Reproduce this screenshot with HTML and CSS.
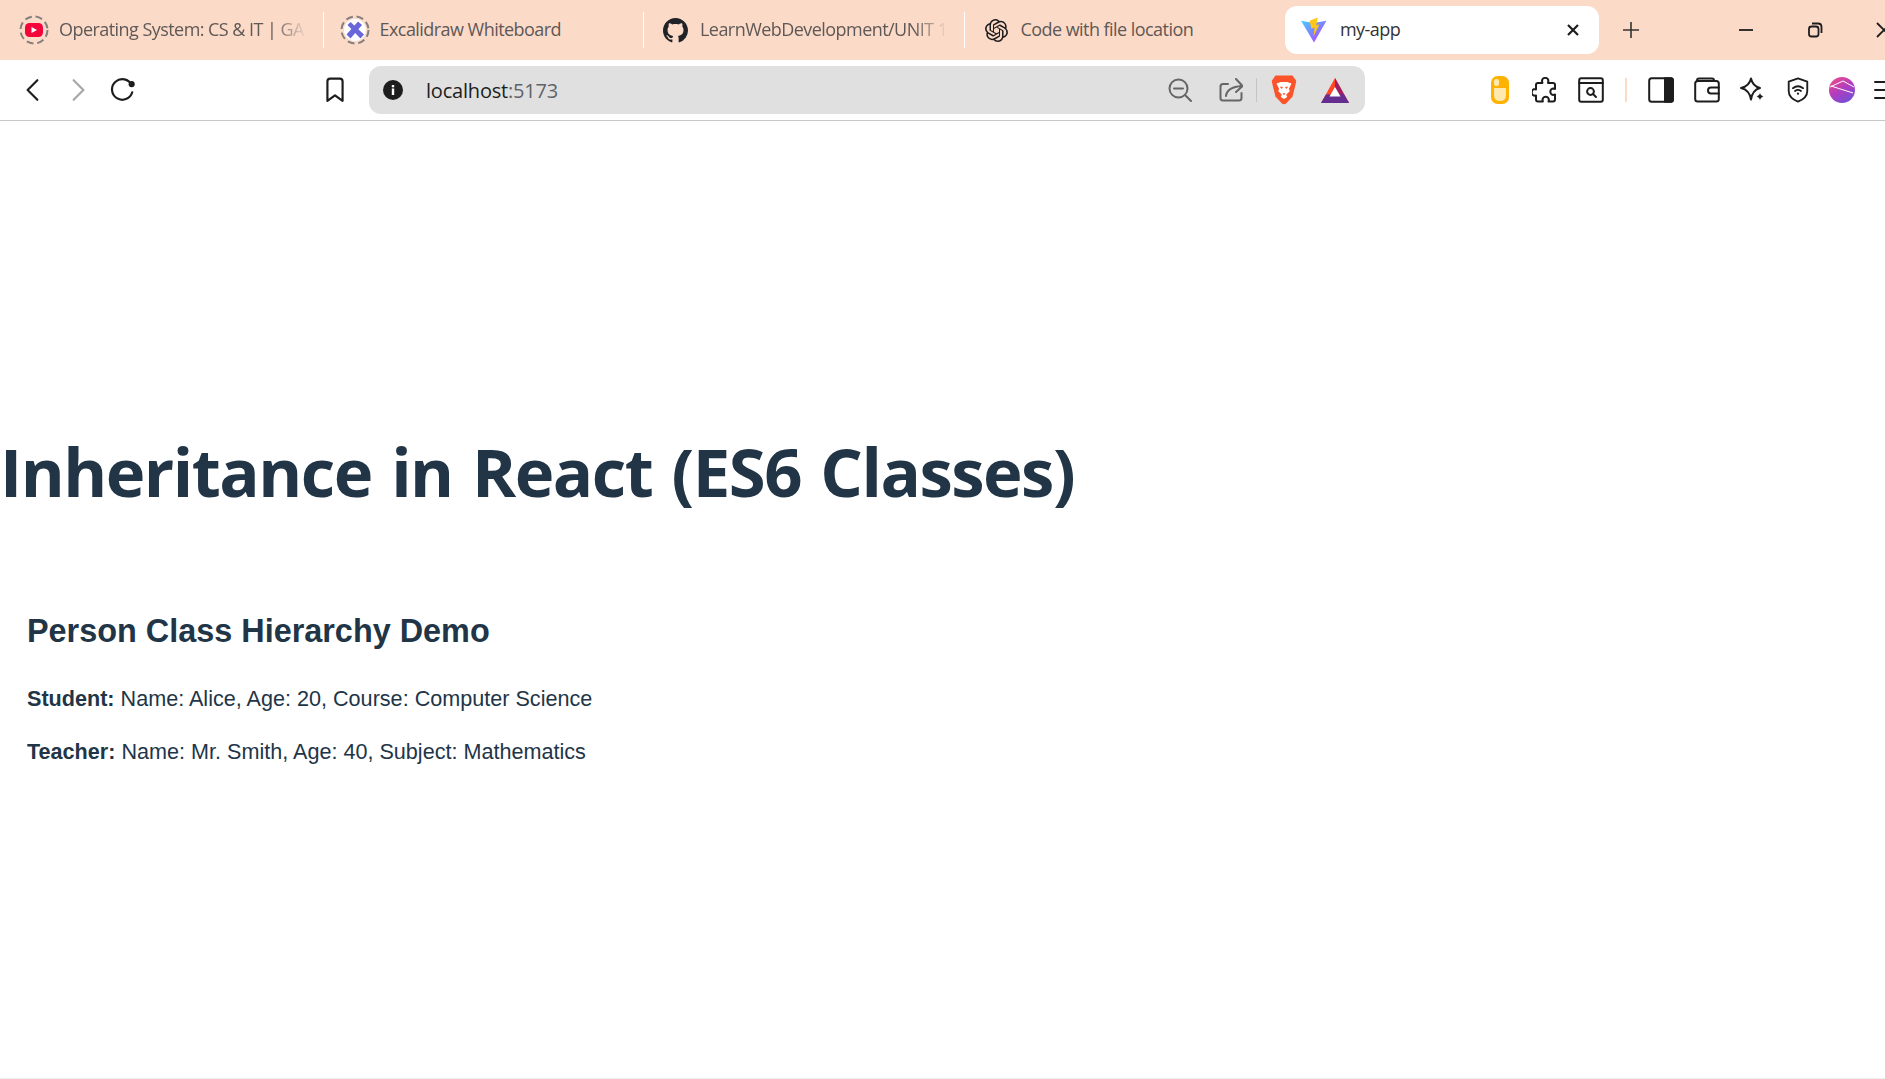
FILE: index.html
```html
<!DOCTYPE html>
<html lang="en">
<head>
    <meta charset="UTF-8">
    <meta name="viewport" content="width=device-width, initial-scale=1.0">
    <title>my-app</title>
    <link rel="stylesheet" href="styles.css">
</head>
<body>
    <div class="tabstrip">
        <div class="tab tab-first">
            <svg class="favicon" viewBox="0 0 30 30">
                <circle class="ring" cx="15" cy="15" r="13.5"/>
                <rect x="6" y="8" width="18" height="14" rx="4.5" fill="#f5033b"/>
                <path d="M12.5 12l5.5 3-5.500 3z" fill="#fff"/>
            </svg>
            <span class="tab-title">Operating System: CS &amp; IT | GA</span>
        </div>
        <div class="tab">
            <svg class="favicon" viewBox="0 0 30 30">
                <circle cx="15" cy="15" r="11" fill="#fff"/>
                <circle class="ring" cx="15" cy="15" r="13.5"/>
                <path d="M6.500 19.500L18 6.500l4 3.500L10.500 23.500z" fill="#6965db"/>
                <path d="M7.500 10L10.500 7 24 19.500 20.500 23.500z" fill="#6965db"/>
            </svg>
            <span class="tab-title tab-title-plain">Excalidraw Whiteboard</span>
        </div>
        <div class="tab">
            <span class="favicon favicon-box">
                <svg class="favicon-small" viewBox="0 0 16 16">
                    <path fill="#1f2328" d="M8 0C3.580 0 0 3.580 0 8c0 3.540 2.290 6.530 5.470 7.590.4.070.55-.17.55-.38 0-.19-.01-.82-.01-1.490-2.010.37-2.530-.49-2.690-.94-.09-.23-.48-.94-.82-1.130-.28-.15-.68-.52-.01-.53.63-.01 1.080.58 1.230.82.720 1.210 1.870.87 2.330.66.070-.52.280-.87.510-1.070-1.780-.2-3.640-.89-3.640-3.950 0-.87.310-1.590.820-2.150-.08-.2-.36-1.020.08-2.120 0 0 .67-.21 2.200.82.640-.18 1.320-.27 2-.27s1.360.09 2 .27c1.530-1.040 2.200-.82 2.200-.82.440 1.100.16 1.920.08 2.120.51.560.82 1.270.82 2.150 0 3.070-1.870 3.750-3.650 3.950.29.250.54.730.54 1.480 0 1.070-.01 1.930-.01 2.200 0 .21.150.46.550.38A8.010 8.010 0 0 0 16 8c0-4.420-3.580-8-8-8z"/>
                </svg>
            </span>
            <span class="tab-title">LearnWebDevelopment/UNIT 1</span>
        </div>
        <div class="tab tab-last">
            <span class="favicon favicon-box">
                <svg class="favicon-openai" viewBox="0 0 24 24">
                    <path fill="#1d1d1d" d="M22.2819 9.8211a5.9847 5.9847 0 0 0-.5157-4.9108 6.0462 6.0462 0 0 0-6.5098-2.9A6.0651 6.0651 0 0 0 4.9807 4.1818a5.9847 5.9847 0 0 0-3.9977 2.9 6.0462 6.0462 0 0 0 .7427 7.0966 5.98 5.98 0 0 0 .511 4.9107 6.051 6.051 0 0 0 6.5146 2.9001A5.9847 5.9847 0 0 0 13.2599 24a6.0557 6.0557 0 0 0 5.7718-4.2058 5.9894 5.9894 0 0 0 3.9977-2.9001 6.0557 6.0557 0 0 0-.7475-7.0729zm-9.022 12.6081a4.4755 4.4755 0 0 1-2.8764-1.0408l.1419-.0804 4.7783-2.7582a.7948.7948 0 0 0 .3927-.6813v-6.7369l2.02 1.1686a.071.071 0 0 1 .038.052v5.5826a4.504 4.504 0 0 1-4.4945 4.4944zm-9.6607-4.1254a4.4708 4.4708 0 0 1-.5346-3.0137l.142.0852 4.783 2.7582a.7712.7712 0 0 0 .7806 0l5.8428-3.3685v2.3324a.0804.0804 0 0 1-.0332.0615L9.74 19.9502a4.4992 4.4992 0 0 1-6.1408-1.6464zM2.3408 7.8956a4.485 4.485 0 0 1 2.3655-1.9728V11.6a.7664.7664 0 0 0 .3879.6765l5.8144 3.3543-2.0201 1.1685a.0757.0757 0 0 1-.071 0l-4.8303-2.7865A4.504 4.504 0 0 1 2.3408 7.872zm16.5963 3.8558L13.1038 8.364 15.1192 7.2a.0757.0757 0 0 1 .071 0l4.8303 2.7913a4.4944 4.4944 0 0 1-.6765 8.1042v-5.6772a.79.79 0 0 0-.407-.667zm2.0107-3.0231l-.142-.0852-4.7735-2.7818a.7759.7759 0 0 0-.7854 0L9.409 9.2297V6.8974a.0662.0662 0 0 1 .0284-.0615l4.8303-2.7866a4.4992 4.4992 0 0 1 6.6802 4.66zM8.3065 12.863l-2.02-1.1638a.0804.0804 0 0 1-.038-.0567V6.0742a4.4992 4.4992 0 0 1 7.3757-3.4537l-.142.0805L8.704 5.459a.7948.7948 0 0 0-.3927.6813zm1.0976-2.3654l2.602-1.4998 2.6069 1.4998v2.9994l-2.5974 1.4997-2.6067-1.4997Z"/>
                </svg>
            </span>
            <span class="tab-title tab-title-plain">Code with file location</span>
        </div>
        <div class="tab tab-active">
            <svg class="favicon-vite" viewBox="0 0 24 24">
                <defs>
                    <linearGradient id="vite-a" x1="0" y1="0" x2="1" y2="1">
                        <stop offset="0" stop-color="#41d1ff"/>
                        <stop offset="1" stop-color="#bd34fe"/>
                    </linearGradient>
                </defs>
                <path d="M0 3.500l11.500 2 12-2L12 23.500z" fill="url(#vite-a)"/>
                <path d="M8 3.500L15.500 0.500l-1.500 7 3-0.500-5.500 11 1-8-3 0.500z" fill="#ffc517"/>
            </svg>
            <span class="tab-title tab-title-plain">my-app</span>
            <svg class="tab-close" viewBox="0 0 14 14" fill="none" stroke="#1d1d1d" stroke-width="2.200">
                <path d="M2 2l10 10M12 2L2 12"/>
            </svg>
        </div>
        <svg class="new-tab" viewBox="0 0 18 18" fill="none" stroke="#333" stroke-width="1.600">
            <path d="M9 1v16M1 9h16"/>
        </svg>
        <div class="window-buttons">
            <svg class="window-button" viewBox="0 0 16 16" fill="none" stroke="#1d1d1d" stroke-width="1.800">
                <path d="M1 8h14"/>
            </svg>
            <svg class="window-button" viewBox="0 0 16 16" fill="none" stroke="#1d1d1d" stroke-width="1.800">
                <rect x="2" y="4.500" width="9.500" height="10" rx="2.500"/>
                <path d="M5 1.500h6q3.500 0 3.500 3.500v6"/>
            </svg>
            <svg class="window-button" viewBox="0 0 16 16" fill="none" stroke="#1d1d1d" stroke-width="1.800">
                <path d="M1 1l14 14M15 1L1 15"/>
            </svg>
        </div>
    </div>

    <div class="toolbar">
        <div class="tool">
            <svg viewBox="0 0 24 24" class="icon"><path d="M16 3L7 12l9 9"/></svg>
        </div>
        <div class="tool tool-off">
            <svg viewBox="0 0 24 24" class="icon"><path d="M8 3l9 9-9 9"/></svg>
        </div>
        <div class="tool">
            <svg viewBox="0 0 24 24" class="icon icon-reload">
                <path d="M20 8.500A9.500 9.500 0 1 0 20.500 15"/>
                <circle cx="20" cy="7.500" r="2.800" fill="#1d1d1d" stroke="none"/>
            </svg>
        </div>
        <div class="tool bookmark">
            <svg viewBox="0 0 24 24" class="icon">
                <path d="M5 4q0-2.500 2.500-2.500h9q2.500 0 2.500 2.500v18l-7-5-7 5z"/>
            </svg>
        </div>
        <div class="address">
            <svg class="info" viewBox="0 0 20 20">
                <circle cx="10" cy="10" r="10" fill="#1d1d1d"/>
                <rect x="8.800" y="8.500" width="2.400" height="6.500" fill="#fff"/>
                <rect x="8.800" y="5" width="2.400" height="2.300" fill="#fff"/>
            </svg>
            <span class="url">localhost<span class="url-port">:5173</span></span>
            <svg class="addr-icon addr-zoom" viewBox="0 0 24 24">
                <circle cx="10.500" cy="10.500" r="9"/>
                <path d="M6 10.500h9M17 17l6 6"/>
            </svg>
            <svg class="addr-icon addr-share" viewBox="0 0 24 24">
                <path d="M9 6H4q-2.500 0-2.500 2.500v11.500q0 2.500 2.500 2.500h16q2.500 0 2.500-2.500v-5"/>
                <path d="M7 18q1-9 16-10M17 1l6.500 7-6.500 6"/>
            </svg>
            <div class="addr-sep"></div>
            <svg class="addr-brave" viewBox="0 0 24 28">
                <path d="M4 0.500h16l3.500 5-1 4.500-2.500 10-6 6.500q-2 1.500-4 0l-6-6.500L1.500 10l-1-4.500z" fill="#fb542b"/>
                <path d="M5 8l4-1.500h6L19 8l-2.500 5 1 2-3.500 3.500 1 2-3 2-3-2 1-2L6.500 15l1-2z" fill="#fff"/>
                <path d="M8 11h3l-1 2zM16 11h-3l1 2zM10.500 17h3L12 19z" fill="#fb542b"/>
            </svg>
            <svg class="addr-bat" viewBox="0 0 28 25">
                <path d="M14 0l14 25H0z" fill="#ff4724"/>
                <path d="M14 0l14 25h-9L14 12z" fill="#9e1f63"/>
                <path d="M0 25l5-8.500h18l5 8.500z" fill="#662d91"/>
                <path d="M14 9l5.500 9.500h-11z" fill="#fff"/>
            </svg>
        </div>
        <div class="tools-right">
            <div class="tool-wide">
                <svg viewBox="0 0 18 28" class="ext-mouse">
                    <rect width="18" height="28" rx="6.500" fill="#ffb300"/>
                    <path d="M3 12h12v7q0 6-6 6t-6-6z" fill="#ffe9ae"/>
                    <rect x="3" y="3" width="5" height="7" rx="2" fill="#ffe9ae"/>
                </svg>
            </div>
            <div class="tool-wide">
                <svg viewBox="0 0 26 26" class="icon">
                    <path d="M10 4a3.200 3.200 0 1 1 6.400 0l-.4 2h5q2 0 2 2v4l-1.500-.5a3.200 3.200 0 1 0 0 6.400l1.500-.4v5q0 2-2 2h-4.500l.4-1.500a3.200 3.200 0 1 0-6.400 0l.4 1.500H6q-2 0-2-2v-4l-1 .2a3.300 3.300 0 1 1 0-6.600l1 .4V8q0-2 2-2h4.400z"/>
                </svg>
            </div>
            <div class="tool-wide">
                <svg viewBox="0 0 26 26" class="icon">
                    <rect x="1.200" y="1.200" width="23.600" height="23.600" rx="2"/>
                    <path d="M1.200 6h23.600"/>
                    <circle cx="12.500" cy="14.500" r="3.400"/>
                    <path d="M15 17l3 3"/>
                </svg>
            </div>
            <div class="tool-sep"></div>
            <div class="tool-wide">
                <svg viewBox="0 0 26 26" class="icon">
                    <rect x="1.200" y="1.200" width="23.600" height="23.600" rx="2.500"/>
                    <path d="M17 1.200h6q2 0 2 2v19.600q0 2-2 2h-6z" fill="#1d1d1d"/>
                </svg>
            </div>
            <div class="tool-wide">
                <svg viewBox="0 0 26 26" class="icon">
                    <rect x="1.200" y="4" width="23.600" height="20.500" rx="2.500"/>
                    <path d="M3 4V3.500q0-2 2-2h13q2 0 2 2V4"/>
                    <path d="M24.800 10.500H17q-3 0-3 3t3 3h7.800"/>
                </svg>
            </div>
            <div class="tool-wide">
                <svg viewBox="0 0 26 26" class="icon">
                    <path d="M12 1.500q1.500 7.500 9 9.500-7.500 2-9 11.500Q10.500 13 2 11q8.500-2 10-9.500z"/>
                    <path d="M21 15.500q.8 3.200 4 4-3.200.8-4 4.500-.8-3.700-4-4.500 3.200-.8 4-4z" fill="#1d1d1d" stroke="#fff" stroke-width=".8"/>
                </svg>
            </div>
            <div class="tool-wide">
                <svg viewBox="0 0 24 28" class="icon">
                    <path d="M12 1.500l10 3.500v10q0 7.500-10 11.500Q2 22.500 2 15V5z"/>
                    <path d="M6.500 12q5.500-4 11 0M8.800 15q3.200-2.200 6.400 0"/>
                    <circle cx="12" cy="18" r="1.200" fill="#1d1d1d" stroke="none"/>
                </svg>
            </div>
            <div class="tool-wide tool-avatar">
                <svg viewBox="0 0 26 26" class="ext-avatar">
                    <defs>
                        <linearGradient id="avatar-a" x1="0.200" y1="0" x2="0.800" y2="1">
                            <stop offset="0" stop-color="#ec4a8c"/>
                            <stop offset="0.500" stop-color="#b03dc0"/>
                            <stop offset="1" stop-color="#6e52d8"/>
                        </linearGradient>
                    </defs>
                    <circle cx="13" cy="13" r="13" fill="url(#avatar-a)"/>
                    <path d="M1 10l13-6 11 6M2 9l22 7" stroke="#fff" stroke-width="1" fill="none"/>
                </svg>
            </div>
            <div class="tool-wide tool-menu">
                <svg viewBox="0 0 26 26" class="icon">
                    <path d="M1 5h24M1 13h24M1 21h24"/>
                </svg>
            </div>
        </div>
    </div>

    <div class="page">
        <h1>Inheritance in React (ES6 Classes)</h1>
        <div class="demo">
            <h2>Person Class Hierarchy Demo</h2>
            <p><strong>Student:</strong> Name: Alice, Age: 20, Course: Computer Science</p>
            <p><strong>Teacher:</strong> Name: Mr. Smith, Age: 40, Subject: Mathematics</p>
        </div>
    </div>
</body>
</html>
```

FILE: styles.css
```css
* {
    margin: 0;
    padding: 0;
    box-sizing: border-box;
}

html, body {
    height: 100%;
    overflow: hidden;
}

body {
    background: #fff;
    color: #213547;
    font-family: 'Liberation Sans', Arial, sans-serif;
    display: flex;
    flex-direction: column;
}

.tabstrip {
    height: 60px;
    flex: none;
    display: flex;
    align-items: center;
    padding-left: 3px;
    background: #fcdac8;
    font-family: 'Open Sans', 'Noto Sans', sans-serif;
    overflow: hidden;
}

.tab {
    width: 320.500px;
    height: 36px;
    flex: none;
    display: flex;
    align-items: center;
    gap: 10px;
    padding: 0 16px 0 16px;
    border-right: 1.500px solid #fff;
}

.tab-last {
    border-right: none;
}

.tab-active {
    width: 314px;
    height: 48px;
    gap: 13px;
    padding: 0 19px 0 16px;
    background: #fff;
    border: none;
    border-radius: 12px;
}

.favicon {
    width: 30px;
    height: 30px;
    flex: none;
}

.favicon-box {
    display: flex;
    align-items: center;
    justify-content: center;
}

.favicon-small {
    width: 25px;
    height: 25px;
}

.favicon-openai {
    width: 23px;
    height: 23px;
    margin-left: 2px;
}

.favicon-vite {
    width: 26px;
    height: 26px;
    flex: none;
}

.ring {
    fill: none;
    stroke: #85807d;
    stroke-width: 2;
    stroke-dasharray: 7 3.800;
}

.tab-title {
    flex: 1;
    min-width: 0;
    font-size: 18px;
    letter-spacing: -0.55px;
    line-height: 24px;
    margin-top: -2px;
    color: #5e5856;
    white-space: nowrap;
    overflow: hidden;
    -webkit-mask-image: linear-gradient(to right, #000 86%, transparent 100%);
    mask-image: linear-gradient(to right, #000 86%, transparent 100%);
}

.tab-title-plain {
    -webkit-mask-image: none;
    mask-image: none;
}

.tab-active .tab-title {
    color: #333;
}

.tab-close {
    width: 14px;
    height: 14px;
    flex: none;
}

.new-tab {
    width: 18px;
    height: 18px;
    flex: none;
    margin-left: 23px;
}

.window-buttons {
    display: flex;
    align-items: center;
    gap: 53px;
    margin-left: 98px;
    flex: none;
}

.window-button {
    width: 16px;
    height: 16px;
    flex: none;
}

.toolbar {
    height: 61px;
    flex: none;
    display: flex;
    align-items: center;
    padding-left: 11px;
    border-bottom: 1px solid #c8c8c8;
    overflow: hidden;
}

.tool {
    width: 44.500px;
    height: 44px;
    flex: none;
    display: flex;
    align-items: center;
    justify-content: center;
}

.tool-off .icon {
    stroke: #a6a6a6;
}

.bookmark {
    margin-left: 168.500px;
    margin-right: 11.500px;
}

.icon {
    width: 26px;
    height: 26px;
    fill: none;
    stroke: #1d1d1d;
    stroke-width: 2;
    stroke-linecap: round;
    stroke-linejoin: round;
}

.icon-reload {
    margin: -2px 0 0 2px;
}

.address {
    width: 996px;
    height: 48px;
    flex: none;
    display: flex;
    align-items: center;
    padding-left: 14px;
    background: #e0e0e0;
    border-radius: 12px;
}

.info {
    width: 20px;
    height: 20px;
    flex: none;
}

.url {
    margin-left: 23px;
    font-family: 'Open Sans', 'Noto Sans', sans-serif;
    font-size: 20px;
    letter-spacing: -0.2px;
    color: #1d1d1d;
}

.url-port {
    color: #5f6368;
}

.addr-icon {
    width: 24px;
    height: 24px;
    flex: none;
    fill: none;
    stroke: #666;
    stroke-width: 2;
    stroke-linecap: round;
    stroke-linejoin: round;
}

.addr-zoom {
    margin-left: auto;
}

.addr-share {
    margin-left: 27px;
}

.addr-sep {
    width: 1.500px;
    height: 24px;
    margin-left: 13px;
    background: #c4c4c4;
}

.addr-brave {
    width: 26px;
    height: 30px;
    margin-left: 14px;
    flex: none;
}

.addr-bat {
    width: 28px;
    height: 25px;
    margin-left: 24px;
    margin-right: 16px;
    flex: none;
}

.tools-right {
    display: flex;
    align-items: center;
    flex: none;
    margin-left: 112px;
}

.tool-wide {
    width: 45.500px;
    height: 44px;
    flex: none;
    display: flex;
    align-items: center;
    justify-content: center;
}

.tool-avatar {
    margin-left: -1px;
}

.tool-menu {
    margin-left: -1px;
}

.tool-sep {
    width: 2px;
    height: 24px;
    margin: 0 11.500px;
    background: #fcdac8;
    flex: none;
}

.ext-mouse {
    width: 18px;
    height: 28px;
}

.ext-avatar {
    width: 26px;
    height: 26px;
}

.page {
    flex: 1;
    border-bottom: 1px solid #f0f0f0;
}

h1 {
    margin-top: 314px;
    font-family: 'Open Sans', 'Noto Sans', sans-serif;
    font-size: 67px;
    font-weight: 700;
    line-height: 1.1;
    letter-spacing: -1.500px;
    word-spacing: 3.400px;
    color: #213547;
}

.demo {
    margin-top: 103px;
    padding-left: 27px;
}

h2 {
    font-size: 32.400px;
    font-weight: 700;
    line-height: 1.2;
    margin-bottom: 35px;
}

.demo p {
    font-size: 21.600px;
    line-height: 1.2;
    margin-bottom: 28px;
}
```
